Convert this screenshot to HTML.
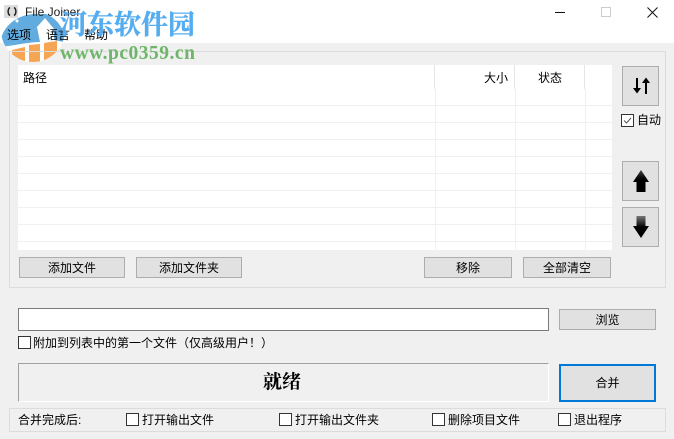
<!DOCTYPE html>
<html><head><meta charset="utf-8">
<style>
html,body{margin:0;padding:0}
body{width:674px;height:439px;position:relative;overflow:hidden;background:#f0f0f0;font-family:"Liberation Sans","WenQuanYi Zen Hei","Noto Sans CJK SC",sans-serif;font-size:12px;color:#000}
.a{position:absolute;box-sizing:border-box}
.t{position:absolute;white-space:nowrap;line-height:14px;font-size:12px}
.b{position:absolute;box-sizing:border-box;background:#e1e1e1;border:1px solid #adadad;text-align:center;font-size:12px}
.c{position:absolute;box-sizing:border-box;width:13px;height:13px;background:#fff;border:1px solid #333}
.l{position:absolute;background:#f0f0f0}
</style></head><body>
<div class="a" style="left:0;top:0;width:674px;height:43px;background:#fff"></div>

<svg class="a" style="left:0;top:0" width="72" height="64" viewBox="0 0 72 64">
<defs><clipPath id="cp"><circle cx="33" cy="30" r="32"/></clipPath></defs>
<circle cx="33" cy="30" r="32" fill="#fff" opacity=".92"/>
<g clip-path="url(#cp)">
<path d="M0 47C0 26 18 14 36 14L46 14C56 18 62 26 66 38L64 42L54 40L54 29L45 18L37 27C28 36 14 44 0 47Z" fill="#62abdf"/>
<path d="M0 47C14 44 28 36 37 27L40 42C28 42 12 46 0 47Z" fill="#62abdf"/>
<path d="M12 50L25 47V64H12Z" fill="#f5a553"/>
<path d="M29 45L40 44V64H29Z" fill="#f5a553"/>
<path d="M44 43L57 41V56L44 64Z" fill="#f5a553"/>
</g>
<circle cx="17" cy="21" r="1.500" fill="#fff"/>
</svg>

<div class="t" style="left:25px;top:5px;color:#222">File Joiner</div>
<div class="t" style="left:7px;top:28px">选项</div>
<div class="t" style="left:46px;top:28px">语言</div>
<div class="t" style="left:84px;top:28px">帮助</div>
<div class="a" style="left:555px;top:12px;width:10px;height:1px;background:#111"></div>
<div class="a" style="left:601px;top:7px;width:10px;height:10px;border:1px solid #ccc"></div>
<svg class="a" style="left:647px;top:7px" width="11" height="11"><path d="M0.500 0.500L10.500 10.500M10.500 0.500L0.500 10.500" stroke="#111" fill="none"/></svg>

<div class="a" style="left:9px;top:51px;width:657px;height:237px;border:1px solid #dcdcdc"></div>
<div class="a" style="left:18px;top:65px;width:594px;height:185px;background:#fff"></div>
<div class="l" style="left:18px;top:105px;width:594px;height:1px"></div>
<div class="l" style="left:18px;top:122px;width:594px;height:1px"></div>
<div class="l" style="left:18px;top:139px;width:594px;height:1px"></div>
<div class="l" style="left:18px;top:156px;width:594px;height:1px"></div>
<div class="l" style="left:18px;top:173px;width:594px;height:1px"></div>
<div class="l" style="left:18px;top:190px;width:594px;height:1px"></div>
<div class="l" style="left:18px;top:207px;width:594px;height:1px"></div>
<div class="l" style="left:18px;top:224px;width:594px;height:1px"></div>
<div class="l" style="left:18px;top:241px;width:594px;height:1px"></div>
<div class="l" style="left:434px;top:65px;width:1px;height:24px;background:#e5e5e5"></div>
<div class="l" style="left:514px;top:65px;width:1px;height:24px;background:#e5e5e5"></div>
<div class="l" style="left:584px;top:65px;width:1px;height:24px;background:#e5e5e5"></div>
<div class="l" style="left:435px;top:89px;width:1px;height:161px"></div>
<div class="l" style="left:515px;top:89px;width:1px;height:161px"></div>
<div class="l" style="left:585px;top:89px;width:1px;height:161px"></div>
<div class="t" style="left:23px;top:71px">路径</div>
<div class="t" style="left:484px;top:71px">大小</div>
<div class="t" style="left:538px;top:71px">状态</div>

<div class="b" style="left:19px;top:257px;width:106px;height:21px;line-height:21px">添加文件</div>
<div class="b" style="left:136px;top:257px;width:106px;height:21px;line-height:21px">添加文件夹</div>
<div class="b" style="left:424px;top:257px;width:88px;height:21px;line-height:21px">移除</div>
<div class="b" style="left:523px;top:257px;width:88px;height:21px;line-height:21px">全部清空</div>

<div class="b" style="left:622px;top:66px;width:37px;height:40px"></div>
<svg class="a" style="left:632px;top:77px" width="19" height="18"><path d="M5 1V13" stroke="#000" stroke-width="2" fill="none"/><path d="M1 11H9L5 16.500Z" fill="#000"/><path d="M14 17V4" stroke="#000" stroke-width="2" fill="none"/><path d="M10 6H18L14 0.500Z" fill="#000"/></svg>
<div class="c" style="left:621px;top:114px"></div>
<svg class="a" style="left:622px;top:115px" width="11" height="11"><path d="M2 5.500L4.500 8L9 3" stroke="#555" fill="none"/></svg>
<div class="t" style="left:637px;top:113px">自动</div>
<div class="b" style="left:622px;top:161px;width:37px;height:40px"></div>
<svg class="a" style="left:633px;top:170px" width="16" height="22"><defs><linearGradient id="g1" x1="0" y1="0" x2="0" y2="1"><stop offset="0" stop-color="#444"/><stop offset="0.4" stop-color="#000"/></linearGradient><linearGradient id="g2" x1="0" y1="1" x2="0" y2="0"><stop offset="0" stop-color="#000"/><stop offset="0.5" stop-color="#000"/><stop offset="1" stop-color="#777"/></linearGradient></defs><path d="M8 0L16 12H12.500V22H3.500V12H0Z" fill="url(#g1)"/></svg>
<div class="b" style="left:622px;top:207px;width:37px;height:40px"></div>
<svg class="a" style="left:633px;top:216px" width="16" height="22"><path d="M8 22L16 10H12.500V0H3.500V10H0Z" fill="url(#g2)"/></svg>

<div class="a" style="left:18px;top:308px;width:531px;height:23px;background:#fff;border:1px solid #7a7a7a"></div>
<div class="b" style="left:559px;top:309px;width:97px;height:21px;line-height:21px">浏览</div>
<div class="c" style="left:18px;top:336px"></div>
<div class="t" style="left:33px;top:336px">附加到列表中的第一个文件（仅高级用户！）</div>

<div class="a" style="left:18px;top:363px;width:531px;height:39px;border:1px solid;border-color:#a0a0a0 #fff #fff #a0a0a0"></div>
<div class="t" style="left:263px;top:373px;font-family:'Liberation Serif','Noto Serif CJK SC',serif;font-size:19px;line-height:20px;font-weight:bold">就绪</div>
<div class="b" style="left:559px;top:364px;width:97px;height:38px;line-height:35px;border:2px solid #0078d7">合并</div>

<div class="a" style="left:9px;top:408px;width:657px;height:24px;border:1px solid #dcdcdc"></div>
<div class="t" style="left:18px;top:413px">合并完成后:</div>
<div class="c" style="left:126px;top:413px"></div>
<div class="t" style="left:142px;top:413px">打开输出文件</div>
<div class="c" style="left:279px;top:413px"></div>
<div class="t" style="left:295px;top:413px">打开输出文件夹</div>
<div class="c" style="left:432px;top:413px"></div>
<div class="t" style="left:448px;top:413px">删除项目文件</div>
<div class="c" style="left:558px;top:413px"></div>
<div class="t" style="left:574px;top:413px">退出程序</div>

<div class="a" style="left:4px;top:5px;width:14px;height:13px;background:#ddd"></div>
<svg class="a" style="left:6px;top:6px" width="12" height="11"><path d="M4 1.500C1.500 3 1.500 8 4 9.500M8 1.500C10.500 3 10.500 8 8 9.500" stroke="#222" stroke-width="1.500" fill="none"/></svg>
<div class="t" style="left:60px;top:8px;font-family:'Liberation Serif','Noto Serif CJK SC',serif;font-size:27px;line-height:34px;font-weight:bold;color:#55adf0;-webkit-text-stroke:.4px #55adf0">河东软件园</div>
<div class="t" style="left:60px;top:44px;font-family:'Liberation Serif',serif;font-size:19.500px;line-height:20px;font-weight:bold;color:#6eb56a;letter-spacing:.5px">www.pc0359.cn</div>
</body></html>
